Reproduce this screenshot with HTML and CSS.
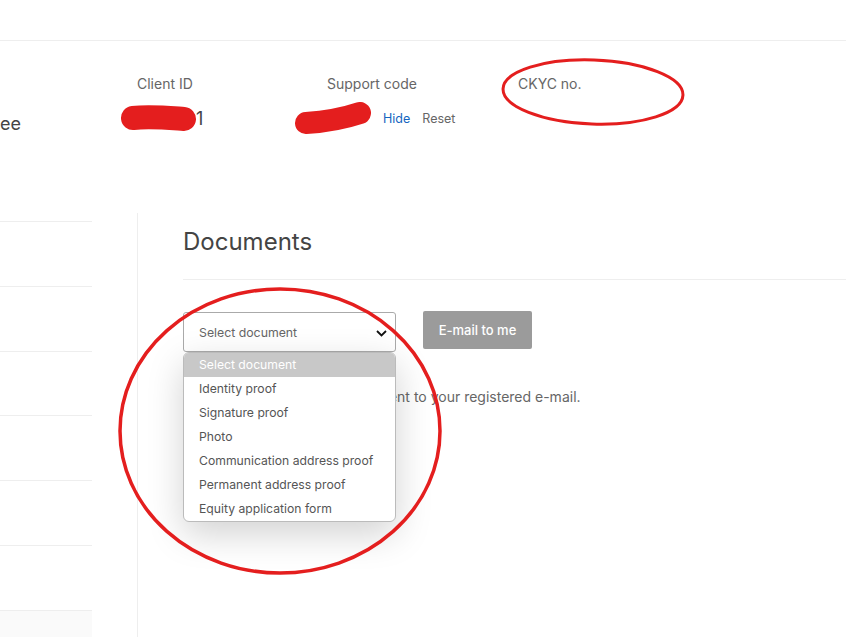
FILE: index.html
```html
<!DOCTYPE html>
<html lang="en">
<head>
    <meta charset="UTF-8">
    <meta name="viewport" content="width=device-width, initial-scale=1.0">
    <title>Console - Documents</title>
    <link rel="stylesheet" href="styles.css">
</head>
<body>
    <header class="topbar"></header>

    <section class="profile">
        <div class="profile-name">ee</div>

        <div class="field field-client">
            <div class="field-label">Client ID</div>
            <div class="field-value">
                <svg class="scribble" width="78" height="30" viewBox="0 0 78 30">
                    <path d="M13 15 C30 13, 50 15, 64 16" stroke="#e41e1e" stroke-width="24" stroke-linecap="round" fill="none"/>
                </svg>
                <span class="value-tail">1</span>
            </div>
        </div>

        <div class="field field-support">
            <div class="field-label">Support code</div>
            <div class="field-value">
                <svg class="scribble" width="80" height="32" viewBox="0 0 80 32">
                    <path d="M12 21 C28 20, 48 17, 66 11" stroke="#e41e1e" stroke-width="22" stroke-linecap="round" fill="none"/>
                </svg>
                <a href="#" class="link-blue">Hide</a>
                <a href="#" class="link-grey">Reset</a>
            </div>
        </div>

        <div class="field field-ckyc">
            <div class="field-label">CKYC no.</div>
        </div>
    </section>

    <div class="content">
        <aside class="sidebar">
            <div class="side-item"></div>
            <div class="side-item"></div>
            <div class="side-item"></div>
            <div class="side-item"></div>
            <div class="side-item"></div>
            <div class="side-item"></div>
            <div class="side-rest"></div>
        </aside>

        <main class="panel">
            <h2 class="panel-title">Documents</h2>

            <div class="doc-form">
                <div class="select-wrap">
                    <div class="select">
                        <span>Select document</span>
                        <svg class="chevron" width="11" height="7" viewBox="0 0 11 7">
                            <path d="M1 1 L5.5 5.5 L10 1" stroke="#111" stroke-width="1.8" fill="none"/>
                        </svg>
                    </div>
                    <ul class="dropdown">
                        <li class="active">Select document</li>
                        <li>Identity proof</li>
                        <li>Signature proof</li>
                        <li>Photo</li>
                        <li>Communication address proof</li>
                        <li>Permanent address proof</li>
                        <li>Equity application form</li>
                    </ul>
                </div>
                <button class="btn-mail">E-mail to me</button>
            </div>

            <p class="note">The chosen document will be sent to your registered e-mail.</p>
        </main>
    </div>

    <!-- red annotation marks on top of the screenshot -->
    <svg class="marks" width="846" height="637" viewBox="0 0 846 637">
        <ellipse cx="593" cy="92" rx="90" ry="32" stroke="#e41e1e" stroke-width="3" fill="none" transform="rotate(2 593 92)"/>
        <ellipse cx="280" cy="431" rx="160" ry="142" stroke="#e41e1e" stroke-width="3.5" fill="none"/>
    </svg>
</body>
</html>
```

FILE: styles.css
```css
body {
    margin: 0;
    font-family: Inter, "Noto Sans", sans-serif;
    background: #fff;
    color: #444;
    position: relative;
    height: 637px;
    overflow: hidden;
}

.topbar {
    height: 40px;
    border-bottom: 1px solid #eee;
}

/* Profile strip */
.profile {
    display: flex;
    align-items: flex-start;
    height: 172px;
    padding-top: 33px;
    box-sizing: border-box;
}

.profile-name {
    width: 120px;
    padding-top: 39px;
    font-size: 18px;
    color: #444;
}

.field-label {
    font-size: 14px;
    line-height: 20px;
    color: #666;
}

.field-value {
    display: flex;
    align-items: center;
    height: 30px;
    margin-top: 9px;
}

.field-client {
    width: 174px;
}

.field-client .field-label {
    padding-left: 17px;
}

.value-tail {
    font-size: 18px;
    color: #444;
    margin-left: -2px;
}

.field-support {
    width: 224px;
}

.field-support .field-label {
    padding-left: 33px;
}

.link-blue,
.link-grey {
    font-size: 12.5px;
    text-decoration: none;
}

.link-blue {
    color: #1565c0;
    margin-left: 9px;
}

.link-grey {
    color: #666;
    margin-left: 12px;
}

/* Content */
.content {
    display: flex;
}

.sidebar {
    width: 92px;
    padding-top: 8px;
    display: flex;
    flex-direction: column;
}

.side-item {
    height: 63.8px;
    border-top: 1px solid #eee;
}

.side-rest {
    height: 40px;
    border-top: 1px solid #eee;
    background: #fafafa;
}

.panel {
    flex: 1;
    margin-left: 45px;
    border-left: 1px solid #eee;
    padding-left: 45px;
    height: 424px;
}

.panel-title {
    margin: 0;
    padding-top: 14px;
    height: 52px;
    font-size: 24px;
    font-weight: 400;
    line-height: 30px;
    color: #444;
    border-bottom: 1px solid #eee;
}

.doc-form {
    display: flex;
    align-items: flex-start;
    gap: 27px;
    margin-top: 32px;
}

.select-wrap {
    position: relative;
    width: 213px;
}

.select {
    height: 40px;
    border: 1px solid #aaa;
    border-radius: 3px;
    box-sizing: border-box;
    display: flex;
    align-items: center;
    justify-content: space-between;
    padding: 0 8px 0 15px;
    font-size: 12.3px;
    color: #666;
}

.chevron {
    margin-top: 2px;
}

.dropdown {
    position: absolute;
    top: 40px;
    left: 0;
    width: 213px;
    box-sizing: border-box;
    margin: 0;
    padding: 0;
    list-style: none;
    background: #fff;
    border: 1px solid #bbb;
    border-radius: 6px;
    overflow: hidden;
    box-shadow: 0 12px 36px rgba(0, 0, 0, 0.18);
    z-index: 2;
}

.dropdown li {
    height: 24px;
    line-height: 24px;
    padding-left: 15px;
    font-size: 12.2px;
    color: #555;
}

.dropdown li.active {
    background: #c8c8c8;
    color: #fff;
}

.btn-mail {
    height: 38px;
    width: 109px;
    margin-top: -1px;
    border: none;
    border-radius: 2px;
    background: #9b9b9b;
    color: #fff;
    font-family: inherit;
    font-size: 13px;
    font-weight: 500;
}

.note {
    margin: 35px 0 0;
    font-size: 14px;
    line-height: 20px;
    color: #666;
}

.marks {
    position: absolute;
    top: 0;
    left: 0;
    pointer-events: none;
    z-index: 5;
}
```
